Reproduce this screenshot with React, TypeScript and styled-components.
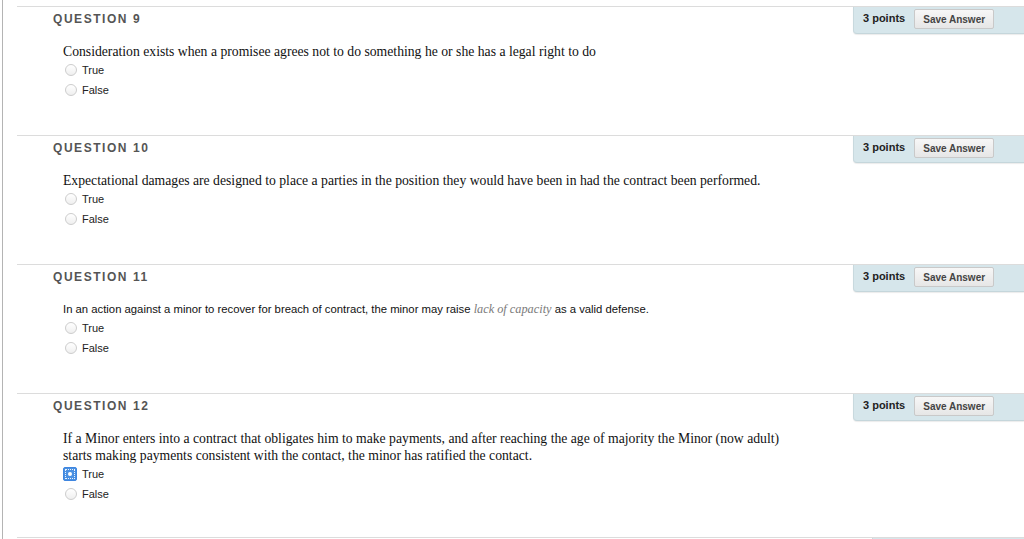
import React from "react";
import styled, { createGlobalStyle } from "styled-components";

const Global = createGlobalStyle`
  html, body { margin: 0; padding: 0; background: #fff; }
  body { font-family: "Liberation Sans", Arial, sans-serif; overflow: hidden; }
`;

const Page = styled.div`
  margin-left: 2px;
  border-left: 1px solid #b4b4b4;
  min-height: 539px;
  padding-top: 6px;
  padding-left: 14px;
  box-sizing: border-box;
`;

const Block = styled.section`
  min-height: 129px;
  padding-bottom: 33px;
  border-top: 1px solid #dcdcdc;
  display: flex;
  flex-direction: column;
  box-sizing: border-box;
`;

const Header = styled.div`
  display: flex;
  justify-content: space-between;
  align-items: flex-start;
  height: 28px;
`;

const Title = styled.h3`
  margin: 0;
  padding: 4px 0 0 36px;
  font-size: 12px;
  line-height: 16px;
  font-weight: bold;
  letter-spacing: 1.55px;
  color: #555;
`;

const PointsPanel = styled.div`
  width: 171px;
  height: 27px;
  box-sizing: border-box;
  background: #d6e6eb;
  border-left: 1px solid #c8d9de;
  border-bottom: 1px solid #c5d6db;
  border-bottom-left-radius: 4px;
  box-shadow: 0 1px 1px rgba(0, 0, 0, 0.08);
  display: flex;
  align-items: flex-start;
  padding-left: 9px;
  gap: 9px;
`;

const Points = styled.span`
  font-size: 11px;
  line-height: 14px;
  font-weight: bold;
  color: #222;
  margin-top: 4px;
`;

const SaveButton = styled.button`
  width: 80px;
  height: 20px;
  margin-top: 2px;
  padding: 0;
  border: 1px solid #c9c9c9;
  border-radius: 2px;
  background: linear-gradient(#f7f7f7, #e6e6e6);
  font-family: "Liberation Sans", Arial, sans-serif;
  font-size: 10px;
  font-weight: bold;
  color: #444;
`;

const Body = styled.div`
  padding: 8px 0 0 46px;
  display: flex;
  flex-direction: column;
`;

const SerifText = styled.p`
  margin: 0;
  font-family: "Liberation Serif", "Times New Roman", serif;
  font-size: 13.7px;
  line-height: 17px;
  color: #111;
`;

const SansText = styled.p`
  margin: 0;
  font-family: "Liberation Sans", Arial, sans-serif;
  font-size: 11.3px;
  line-height: 17px;
  color: #111;
`;

const Term = styled.em`
  font-family: "Liberation Serif", "Times New Roman", serif;
  font-size: 12.3px;
  color: #7a7a7a;
`;

const Options = styled.div`
  display: flex;
  flex-direction: column;
`;

const Option = styled.label`
  display: flex;
  align-items: center;
  height: 20px;
  gap: 5px;
  font-size: 11px;
  color: #222;
`;

const Radio = styled.span<{ $checked?: boolean }>`
  width: ${(p) => (p.$checked ? 14 : 12)}px;
  height: ${(p) => (p.$checked ? 14 : 12)}px;
  margin-left: ${(p) => (p.$checked ? 0 : 2)}px;
  box-sizing: border-box;
  border-radius: ${(p) => (p.$checked ? "2px" : "50%")};
  border: 1px solid ${(p) => (p.$checked ? "#3f86e0" : "#cdcdcd")};
  background: ${(p) =>
    p.$checked ? "#4a90e2" : "linear-gradient(#ffffff, #efefef)"};
  display: flex;
  align-items: center;
  justify-content: center;
  position: relative;
  &::before {
    content: "";
    display: ${(p) => (p.$checked ? "block" : "none")};
    position: absolute;
    inset: 1px;
    border: 1px dotted rgba(255, 255, 255, 0.9);
  }
  &::after {
    content: "";
    display: ${(p) => (p.$checked ? "block" : "none")};
    width: 4px;
    height: 4px;
    border-radius: 50%;
    background: #fff;
  }
`;

const EndRule = styled.div`
  border-top: 1px solid #dcdcdc;
  display: flex;
  justify-content: flex-end;
`;

const PanelStub = styled.div`
  width: 151px;
  height: 6px;
  background: #d6e6eb;
  border-left: 1px solid #c8d9de;
`;

type Q = {
  n: number;
  text: React.ReactNode;
  serif: boolean;
  selected?: "True" | "False";
};

const questions: Q[] = [
  {
    n: 9,
    serif: true,
    text: "Consideration exists when a promisee agrees not to do something he or she has a legal right to do",
  },
  {
    n: 10,
    serif: true,
    text: "Expectational damages are designed to place a parties in the position they would have been in had the contract been performed.",
  },
  {
    n: 11,
    serif: false,
    text: (
      <>
        In an action against a minor to recover for breach of contract, the minor may raise{" "}
        <Term>lack of capacity</Term> as a valid defense.
      </>
    ),
  },
  {
    n: 12,
    serif: true,
    selected: "True",
    text: (
      <>
        If a Minor enters into a contract that obligates him to make payments, and after reaching the age of majority the Minor (now adult)
        <br />
        starts making payments consistent with the contact, the minor has ratified the contact.
      </>
    ),
  },
];

export default function App() {
  return (
    <>
      <Global />
      <Page>
        {questions.map((q) => (
          <Block key={q.n}>
            <Header>
              <Title>QUESTION {q.n}</Title>
              <PointsPanel>
                <Points>3 points</Points>
                <SaveButton type="button">Save Answer</SaveButton>
              </PointsPanel>
            </Header>
            <Body>
              {q.serif ? <SerifText>{q.text}</SerifText> : <SansText>{q.text}</SansText>}
              <Options>
                {(["True", "False"] as const).map((o) => (
                  <Option key={o}>
                    <Radio $checked={q.selected === o} />
                    {o}
                  </Option>
                ))}
              </Options>
            </Body>
          </Block>
        ))}
        <EndRule>
          <PanelStub />
        </EndRule>
      </Page>
    </>
  );
}
